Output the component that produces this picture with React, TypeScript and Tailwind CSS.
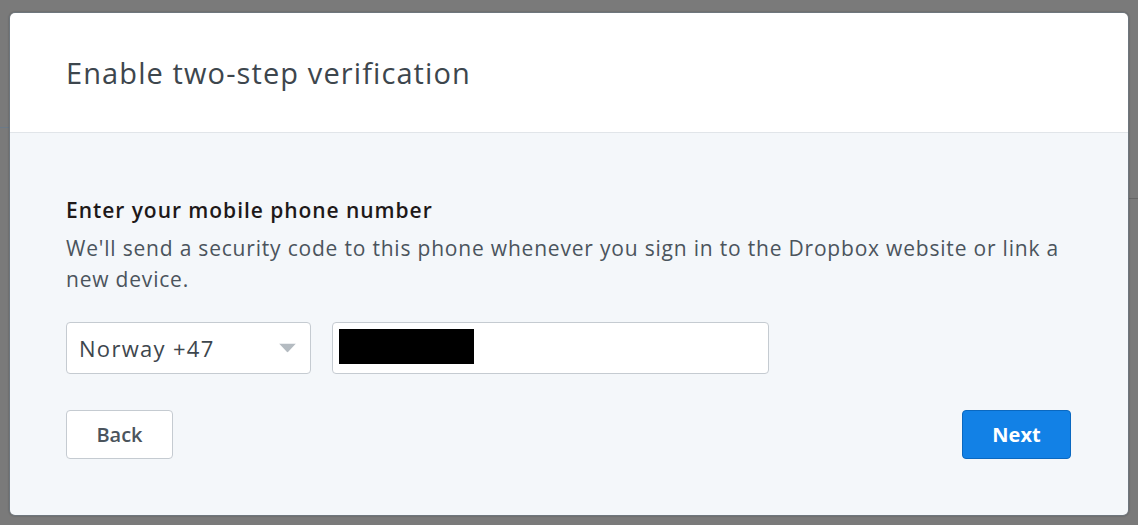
import { useState } from "react"

function CountrySelect() {
	return (
		<div className="relative w-[245px] h-[52px] bg-white border border-[#c5cbd1] rounded-[4px] flex items-center pl-[12px]">
			<span className="text-[22px] tracking-[1.3px] text-[#3d464d]">Norway +47</span>
			<svg
				className="absolute right-[14px] top-1/2 -translate-y-1/2"
				width="17"
				height="9"
				viewBox="0 0 17 9"
			>
				<path d="M0 0 L17 0 L8.5 9 Z" fill="#b4bbc1" />
			</svg>
		</div>
	)
}

function App() {
	const [phone] = useState("")

	return (
		<div className="relative w-full h-[525px] bg-[#7a7a7a] overflow-hidden font-['Open_Sans',sans-serif]">
			{/* underlying page edges */}
			<div className="absolute left-0 top-[127px] w-[10px] h-px bg-[#6b7a88]" />
			<div className="absolute right-0 top-[198px] w-[12px] h-px bg-[#666]" />

			<div className="relative flex pt-[12px] pl-[9px]">
				<div className="w-[1120px] h-[504px] rounded-[6px] border border-[#6e767d] overflow-hidden flex flex-col shadow-[0_0_2px_rgba(0,0,0,0.3)]">
					{/* header */}
					<div className="h-[120px] shrink-0 bg-white border-b border-[#e1e5e9] flex items-center px-[56px]">
						<h1 className="text-[29px] tracking-[1.1px] text-[#3d464d] leading-none pb-[1px]">
							Enable two-step verification
						</h1>
					</div>

					{/* body */}
					<div className="flex-1 bg-[#f4f7fa] pl-[56px] pr-[57px] pt-[63px]">
						<h2 className="text-[21px] tracking-[0.95px] leading-[28px] font-semibold text-[#1e1919]">
							Enter your mobile phone number
						</h2>
						<p className="mt-[9px] text-[21px] tracking-[0.8px] leading-[31px] text-[#4b545d]">
							We'll send a security code to this phone whenever you sign in to the Dropbox website or link a new device.
						</p>

						<div className="mt-[27px] flex gap-[21px]">
							<CountrySelect />
							<div className="relative w-[437px] h-[52px] bg-white border border-[#c5cbd1] rounded-[4px]">
								<input
									type="text"
									defaultValue={phone}
									className="w-full h-full bg-transparent px-[12px] text-[22px] focus:outline-none"
								/>
								<div className="absolute left-[6px] top-[6px] w-[135px] h-[35px] bg-black" />
							</div>
						</div>

						<div className="mt-[36px] flex justify-between">
							<button className="w-[107px] h-[49px] bg-white border border-[#c5cbd1] rounded-[4px] text-[20px] font-semibold text-[#4b545d]">
								Back
							</button>
							<button className="w-[109px] h-[49px] bg-[#1281e6] border border-[#0a68c0] rounded-[4px] text-[20px] font-bold text-white">
								Next
							</button>
						</div>
					</div>
				</div>
			</div>
		</div>
	)
}

export default App
